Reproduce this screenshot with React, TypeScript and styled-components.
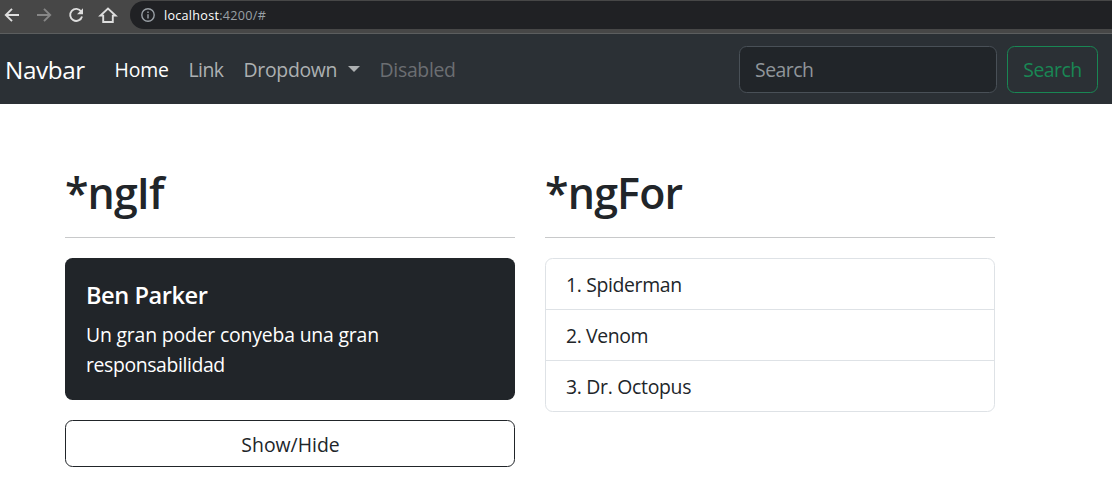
import React from 'react';
import styled, { createGlobalStyle } from 'styled-components';

const GlobalStyle = createGlobalStyle`
  *, *::before, *::after { box-sizing: border-box; }
  body {
    margin: 0;
    background: #fff;
    color: #212529;
    font-family: "Open Sans", "Noto Sans", sans-serif;
    font-size: 19.4px;
    line-height: 30px;
  }
`;

const Spaced = styled.span<{ $ls: number }>`
  letter-spacing: ${({ $ls }) => $ls}px;
  white-space: nowrap;
`;

const BrowserBar = styled.div`
  display: flex;
  align-items: flex-start;
  height: 34px;
  overflow: hidden;
  background: #474747;
  border-bottom: 1px solid #5c5e5f;
`;

const BrowserIcons = styled.svg`
  flex: none;
  width: 130px;
  height: 30px;
  fill: none;
  stroke-width: 1.9;
`;

const AddressBar = styled.div`
  display: flex;
  flex: 1;
  align-items: center;
  height: 28px;
  margin-top: 1px;
  margin-right: -20px;
  padding-left: 11px;
  border-radius: 14px;
  background: #202124;
  color: #9aa0a6;
  font-size: 12.6px;
  line-height: 28px;
`;

const AddressText = styled.span`
  padding-top: 1px;
`;

const InfoIcon = styled.svg`
  width: 14px;
  height: 14px;
  margin-right: 9px;
  fill: none;
  stroke: #9aa0a6;
  stroke-width: 1.4;
`;

const Host = styled(Spaced)`
  color: #fff;
`;

const Navbar = styled.nav`
  display: flex;
  align-items: center;
  height: 70px;
  padding: 1px 14px 0 5px;
  background: #2b3035;
`;

const Brand = styled.a`
  width: 100px;
  color: #fff;
  font-size: 24.3px;
  line-height: 38px;
`;

const NavItems = styled.div`
  display: flex;
  flex: 1;
`;

const NavLink = styled.a<{ $width: number; $tone: string }>`
  display: flex;
  align-items: center;
  width: ${({ $width }) => $width}px;
  padding-left: 9.6px;
  color: ${({ $tone }) => $tone};
`;

const Caret = styled.span`
  margin: -2px 0 0 10.4px;
  border-top: 6px solid currentColor;
  border-left: 6px solid transparent;
  border-right: 6px solid transparent;
`;

const SearchForm = styled.form`
  display: flex;
  gap: 10px;
`;

const SearchInput = styled.input`
  width: 258px;
  height: 47px;
  padding: 0 15px;
  border: 1px solid #495057;
  border-radius: 7.5px;
  background: #212529;
  color: #dee2e6;
  font: inherit;
  letter-spacing: -0.5px;
  &::placeholder { color: #90959a; opacity: 1; }
`;

const OutlineButton = styled.button<{ $tone: string; $width: string }>`
  width: ${({ $width }) => $width};
  height: 47px;
  padding: 0;
  border: 1px solid ${({ $tone }) => $tone};
  border-radius: 7.5px;
  background: transparent;
  color: ${({ $tone }) => $tone};
  font: inherit;
`;

const WideButton = styled(OutlineButton)`
  padding: 3px 0 0 1px;
`;

const Columns = styled.main`
  display: grid;
  grid-template-columns: 450px 450px;
  column-gap: 30px;
  align-items: start;
  padding: 60px 65px 0;
`;

const Column = styled.section`
  display: flex;
  flex-direction: column;
`;

const Title = styled.h1`
  height: 74px;
  margin: 0 0 20px;
  border-bottom: 1px solid #c8c9ca;
  font-size: 42.9px;
  font-weight: 600;
  line-height: 58px;
`;

const Card = styled.article`
  height: 142px;
  margin-bottom: 20px;
  padding: 22px 21px 0;
  border-radius: 7.5px;
  background: #212529;
  color: #fff;
`;

const CardTitle = styled.h5`
  margin: 0 0 10px;
  font-size: 23.6px;
  font-weight: 600;
  line-height: 30px;
`;

const CardText = styled.p`
  margin: 0;
`;

const List = styled.ul`
  margin: 0;
  padding: 0;
  list-style: none;
  border: 1px solid #dee2e6;
  border-radius: 7.5px;
`;

const ListItem = styled.li`
  height: 51px;
  padding: 11px 20px 0;
  border-bottom: 1px solid #dee2e6;
  &:last-child { height: 50px; border-bottom: 0; }
`;

const heroes = [
  { label: '1. Spiderman', ls: -0.35 },
  { label: '2. Venom', ls: -0.4 },
  { label: '3. Dr. Octopus', ls: -0.3 },
];

export default function App() {
  return (
    <>
      <GlobalStyle />
      <BrowserBar>
        <BrowserIcons viewBox="0 0 130 30">
          <path d="M19 15H6M12 8.8L5.8 15L12 21.2" stroke="#dedede" />
          <path d="M37 15H50M44 8.8L50.2 15L44 21.2" stroke="#868686" />
          <path d="M81.2 11.6A6 6 0 1 0 82 16.4" stroke="#dedede" />
          <path d="M83 8.2V14.2H77z" fill="#dedede" />
          <path d="M100.5 15.6H103.2V22H112.8V15.6H115.5L108 8.6Z" stroke="#dedede" />
        </BrowserIcons>
        <AddressBar>
          <InfoIcon viewBox="0 0 14 14">
            <circle cx="7" cy="7" r="6.2" />
            <path d="M7 6.2V10.4M7 3.4V5" />
          </InfoIcon>
          <AddressText>
            <Host $ls={0.27}>localhost</Host>
            <Spaced $ls={0.3}>:4200/#</Spaced>
          </AddressText>
        </AddressBar>
      </BrowserBar>
      <Navbar>
        <Brand><Spaced $ls={-0.4}>Navbar</Spaced></Brand>
        <NavItems>
          <NavLink $width={74} $tone="#fff"><Spaced $ls={-0.2}>Home</Spaced></NavLink>
          <NavLink $width={55} $tone="#adb0b2"><Spaced $ls={-0.6}>Link</Spaced></NavLink>
          <NavLink $width={136} $tone="#adb0b2"><Spaced $ls={-0.3}>Dropdown</Spaced><Caret /></NavLink>
          <NavLink $width={90} $tone="#6b6e72"><Spaced $ls={-0.3}>Disabled</Spaced></NavLink>
        </NavItems>
        <SearchForm>
          <SearchInput placeholder="Search" />
          <OutlineButton type="button" $tone="#198754" $width="91px"><Spaced $ls={-0.5}>Search</Spaced></OutlineButton>
        </SearchForm>
      </Navbar>
      <Columns>
        <Column>
          <Title><Spaced $ls={-0.9}>*ngIf</Spaced></Title>
          <Card>
            <CardTitle><Spaced $ls={-0.45}>Ben Parker</Spaced></CardTitle>
            <CardText>
              <Spaced $ls={-0.18}>Un gran poder conyeba una gran</Spaced><br />
              <Spaced $ls={-0.38}>responsabilidad</Spaced>
            </CardText>
          </Card>
          <WideButton type="button" $tone="#212529" $width="100%"><Spaced $ls={0}>Show/Hide</Spaced></WideButton>
        </Column>
        <Column>
          <Title><Spaced $ls={-0.8}>*ngFor</Spaced></Title>
          <List>
            {heroes.map(({ label, ls }) => (
              <ListItem key={label}><Spaced $ls={ls}>{label}</Spaced></ListItem>
            ))}
          </List>
        </Column>
      </Columns>
    </>
  );
}
